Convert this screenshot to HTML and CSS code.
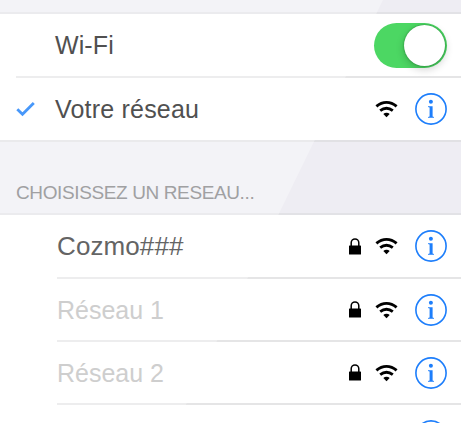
FILE: index.html
```html
<!DOCTYPE html>
<html lang="fr">
<head>
<meta charset="utf-8">
<title>Wi-Fi</title>
<link rel="stylesheet" href="styles.css">
</head>
<body>
<svg class="defs" width="0" height="0">
  <symbol id="wifi" viewBox="0 0 24 18">
    <path d="M1.4 6.3C7.6 1 15.4 1 21.6 6.3M5.2 10.6C9.2 7.5 13.8 7.5 17.8 10.6" fill="none" stroke="currentColor" stroke-width="2.9"/>
    <path d="M8.3 14C10.2 12.2 12.8 12.2 14.7 14L11.5 17.2Z" fill="currentColor"/>
  </symbol>
  <symbol id="lock" viewBox="0 0 12 17">
    <path d="M2.2 8V4.8a3.8 3.8 0 0 1 7.6 0V8" fill="none" stroke="currentColor" stroke-width="1.5"/>
    <rect x="0" y="7.5" width="12" height="9" rx=".6" fill="currentColor"/>
  </symbol>
  <symbol id="info" viewBox="0 0 32 32">
    <circle cx="16" cy="16" r="15.1" fill="none" stroke="currentColor" stroke-width="1.6"/>
    <circle cx="15.9" cy="8.7" r="2" fill="currentColor"/>
    <path d="M13 13.2H17.6V23.4L19 23.9V24.8H13V23.9L14.6 23.4V14.4L13 14Z" fill="currentColor"/>
  </symbol>
</svg>
<main class="settings">
  <div class="top-band"></div>
  <section class="group">
    <div class="row current">
      <span class="label wifi-label">Wi-Fi</span>
      <span class="switch"><span class="knob"></span></span>
    </div>
    <div class="row current connected">
      <svg class="check" viewBox="0 0 20 16"><path d="M1.3 8.2L6.5 13.2L17.8 2" fill="none" stroke="currentColor" stroke-width="2.8"/></svg>
      <span class="label network-label">Votre réseau</span>
      <svg class="wifi"><use href="#wifi"/></svg>
      <svg class="info"><use href="#info"/></svg>
    </div>
  </section>
  <h2 class="heading"><span>CHOISISSEZ UN RESEAU...</span></h2>
  <section class="group networks">
    <div class="row available">
      <span class="label cozmo">Cozmo###</span>
      <svg class="lock"><use href="#lock"/></svg>
      <svg class="wifi"><use href="#wifi"/></svg>
      <svg class="info"><use href="#info"/></svg>
    </div>
    <div class="row available">
      <span class="label dim">Réseau 1</span>
      <svg class="lock"><use href="#lock"/></svg>
      <svg class="wifi"><use href="#wifi"/></svg>
      <svg class="info"><use href="#info"/></svg>
    </div>
    <div class="row available">
      <span class="label dim">Réseau 2</span>
      <svg class="lock"><use href="#lock"/></svg>
      <svg class="wifi"><use href="#wifi"/></svg>
      <svg class="info"><use href="#info"/></svg>
    </div>
    <div class="row available">
      <svg class="info"><use href="#info"/></svg>
    </div>
  </section>
  <div class="glare"></div>
</main>
</body>
</html>
```
FILE: styles.css
```css
* { box-sizing: border-box; }

body {
  margin: 0;
  overflow: hidden;
  font-family: "Liberation Sans", Arial, sans-serif;
  color: #505050;
}

.defs { display: block; height: 0; }

.settings {
  position: relative;
  height: 423px;
  overflow: hidden;
  background: #eeedf3;
}

.top-band { height: 12px; }

.group {
  background: #fff;
  border-top: 2px solid #e2e2e6;
}

.group:not(.networks) { border-bottom: 2px solid #e1e1e4; }

.row {
  display: flex;
  align-items: center;
  height: 62px;
  margin-left: 16px;
  padding-right: 14px;
}

.row + .row { border-top: 2px solid #e5e5e6; }

.row.connected { height: 64px; }

.row > * {
  position: relative;
  z-index: 1;
  flex: none;
}

.row.available {
  height: 62px;
  margin-left: 57px;
}

.row.available + .row.available { height: 63px; }

.label {
  margin-right: auto;
  font-size: 25px;
  line-height: 30px;
  white-space: nowrap;
}

.wifi-label { margin-left: 39px; letter-spacing: 0.1px; }

.network-label { margin-left: 19px; letter-spacing: 0.2px; }

.cozmo { font-size: 26px; color: #646464; letter-spacing: 0.1px; }

.dim { color: #cecece; }

.check { width: 20px; height: 16px; color: #4898fa; }

.wifi { width: 24px; height: 18px; margin-right: 16px; color: #000; }

.lock { width: 12px; height: 17px; margin-right: 14px; color: #000; }

.info { width: 32px; height: 32px; margin-left: auto; color: #1d7efb; }

.wifi + .info { margin-left: 0; }

.switch {
  display: flex;
  justify-content: flex-end;
  width: 73px;
  height: 45px;
  padding: 2px;
  border-radius: 23px;
  background: #4cd763;
}

.knob {
  width: 41px;
  height: 41px;
  border-radius: 50%;
  background: #fff;
  box-shadow: 0 3px 8px rgba(0, 0, 0, 0.2), 0 0 2px rgba(0, 90, 20, 0.6);
}

.heading {
  display: flex;
  align-items: flex-end;
  height: 71px;
  margin: 0;
  padding: 0 16px 8px;
  font-size: 19px;
  font-weight: 400;
  line-height: 24px;
  letter-spacing: -0.38px;
  color: #a0a0a2;
}

.heading span { position: relative; z-index: 1; }

/* Diagonal sheen across the bands and separators */
.glare {
  position: absolute;
  inset: 0;
  background: rgba(255, 255, 255, 0.32);
  clip-path: polygon(0 0, 383px 0, 177px 423px, 0 423px);
}
```
